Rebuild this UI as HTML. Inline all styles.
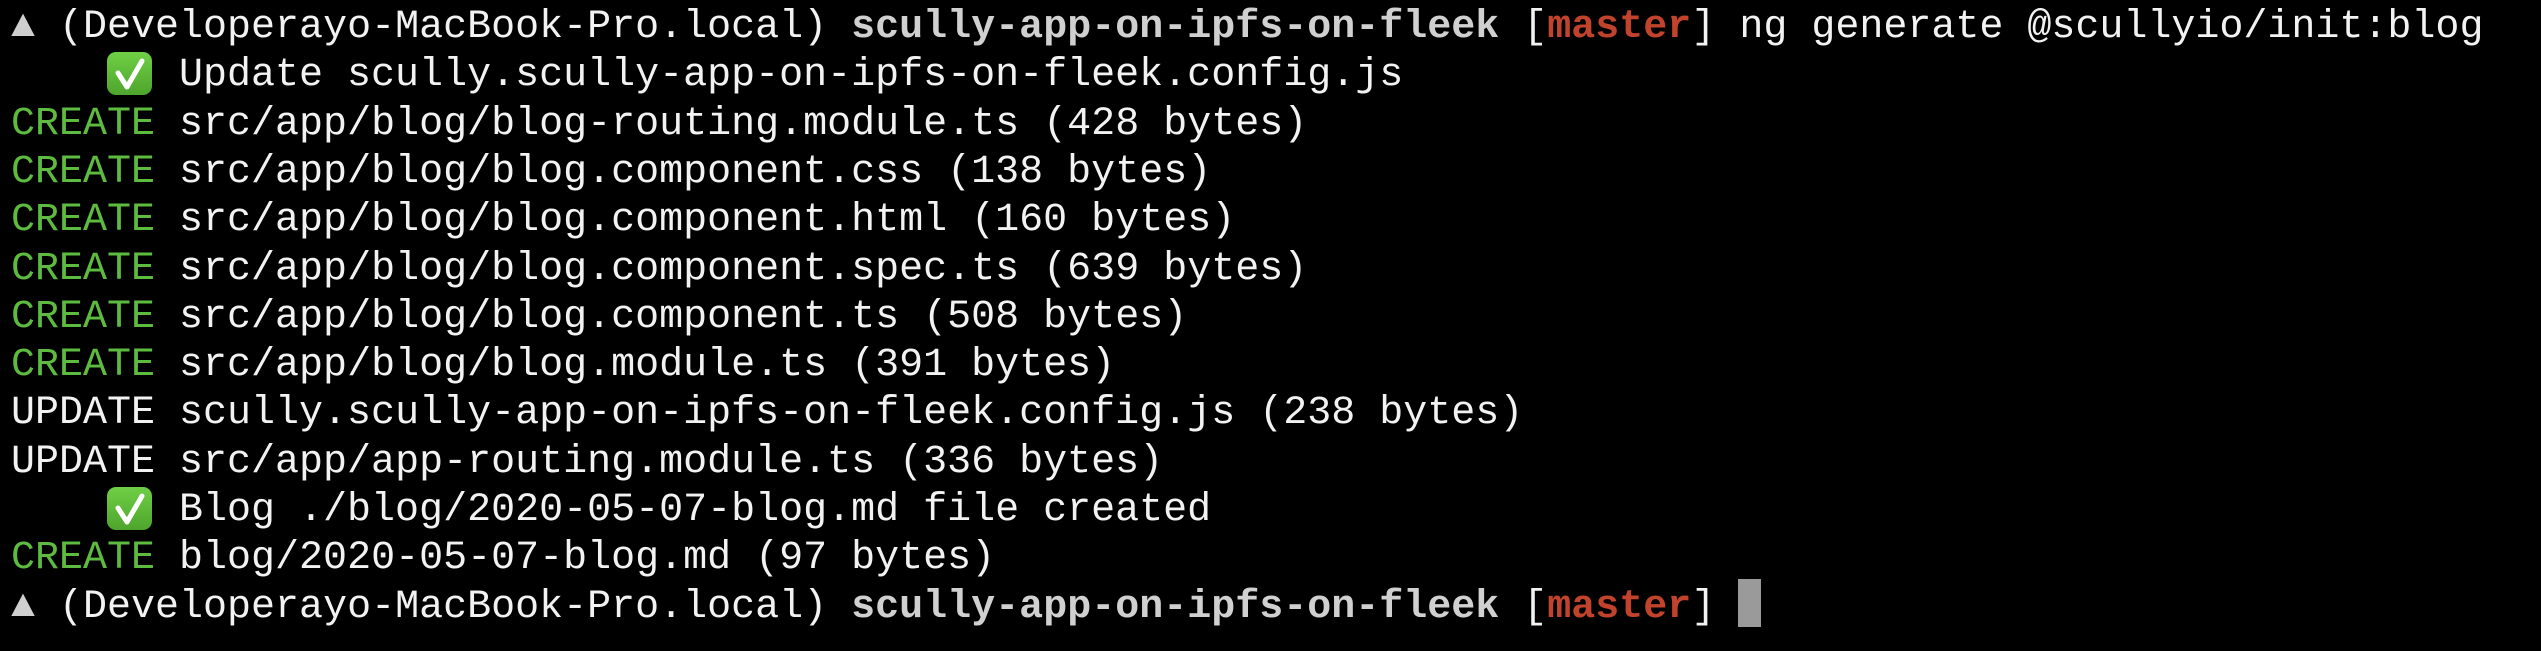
<!DOCTYPE html>
<html><head><meta charset="utf-8"><style>
html,body{margin:0;padding:0;background:#000;width:2541px;height:651px;overflow:hidden}
body{position:relative;font-family:"Liberation Mono","DejaVu Sans Mono",monospace;font-size:40px;color:#f2f2f2}
.l{position:absolute;left:11px;height:48px;line-height:48px;white-space:pre}
.g{color:#5dbb3f}
.b{font-weight:bold;color:#d0d0d0}
.r{font-weight:bold;color:#c2432c}
.tri{color:#cfcfcf}
.em{display:inline-block;width:48px;height:48px;vertical-align:top;position:relative}
.em i{position:absolute;left:0;top:0;width:45px;height:43px;border-radius:9px;background:linear-gradient(#6fcf45,#4ea52d)}
.em svg{position:absolute;left:6px;top:4px}
.cur{position:absolute;left:1738px;top:579px;width:23px;height:48px;background:#9a9a9a}
</style></head><body>
<div class="l" style="top:4px"><span class="tri">▲</span> (Developerayo-MacBook-Pro.local) <span class="b">scully-app-on-ipfs-on-fleek</span> [<span class="r">master</span>] ng generate @scullyio/init:blog</div>
<div class="l" style="top:52px">    <span class="em"><i></i><svg width="34" height="36" viewBox="0 0 34 36"><path d="M5 17 L14 31 L29 5" fill="none" stroke="#fff" stroke-width="5" stroke-linecap="round" stroke-linejoin="round"/></svg></span> Update scully.scully-app-on-ipfs-on-fleek.config.js</div>
<div class="l" style="top:101px"><span class="g">CREATE</span> src/app/blog/blog-routing.module.ts (428 bytes)</div>
<div class="l" style="top:149px"><span class="g">CREATE</span> src/app/blog/blog.component.css (138 bytes)</div>
<div class="l" style="top:197px"><span class="g">CREATE</span> src/app/blog/blog.component.html (160 bytes)</div>
<div class="l" style="top:246px"><span class="g">CREATE</span> src/app/blog/blog.component.spec.ts (639 bytes)</div>
<div class="l" style="top:294px"><span class="g">CREATE</span> src/app/blog/blog.component.ts (508 bytes)</div>
<div class="l" style="top:342px"><span class="g">CREATE</span> src/app/blog/blog.module.ts (391 bytes)</div>
<div class="l" style="top:390px">UPDATE scully.scully-app-on-ipfs-on-fleek.config.js (238 bytes)</div>
<div class="l" style="top:439px">UPDATE src/app/app-routing.module.ts (336 bytes)</div>
<div class="l" style="top:487px">    <span class="em"><i></i><svg width="34" height="36" viewBox="0 0 34 36"><path d="M5 17 L14 31 L29 5" fill="none" stroke="#fff" stroke-width="5" stroke-linecap="round" stroke-linejoin="round"/></svg></span> Blog ./blog/2020-05-07-blog.md file created</div>
<div class="l" style="top:535px"><span class="g">CREATE</span> blog/2020-05-07-blog.md (97 bytes)</div>
<div class="l" style="top:584px"><span class="tri">▲</span> (Developerayo-MacBook-Pro.local) <span class="b">scully-app-on-ipfs-on-fleek</span> [<span class="r">master</span>]</div>
<div class="cur"></div>
</body></html>
